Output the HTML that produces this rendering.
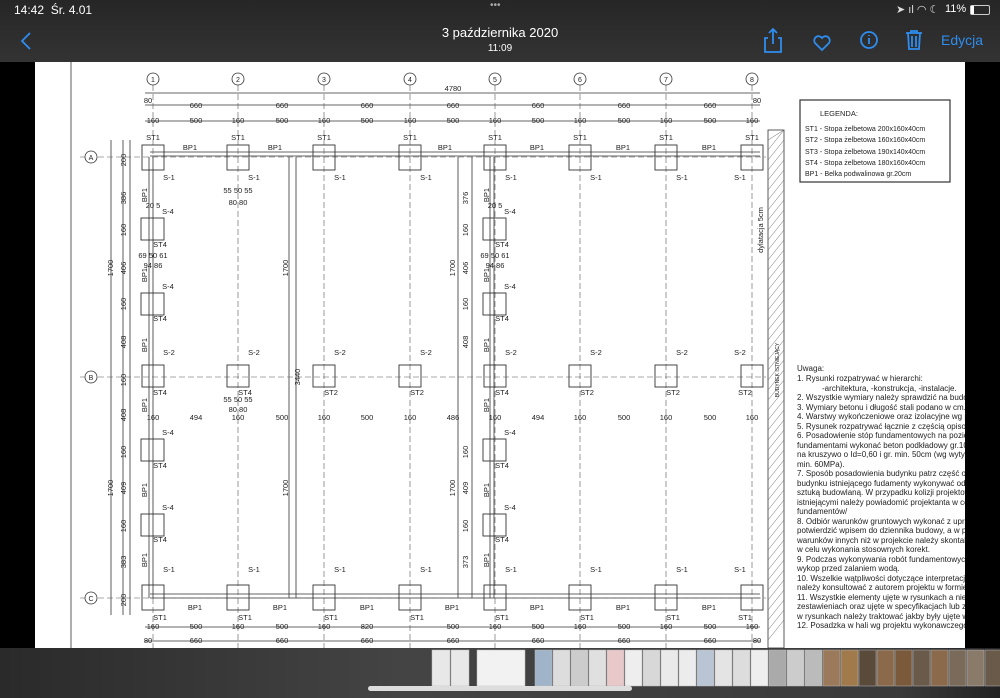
<!DOCTYPE html>
<html><head><meta charset="utf-8"><style>
html,body{margin:0;padding:0;background:#000;width:1000px;height:698px;overflow:hidden;font-family:"Liberation Sans",sans-serif}
#top{position:absolute;left:0;top:0;width:1000px;height:62px;background:linear-gradient(#262626,#333);color:#fff}
#paper{position:absolute;left:35px;top:62px;width:930px;height:586px;background:#fff;overflow:hidden}
#bot{position:absolute;left:0;top:648px;width:1000px;height:50px;background:linear-gradient(90deg,#2a2a2a,#444 40%,#3a3a3a 90%,#222)}
.t{position:absolute;white-space:nowrap}
</style></head><body>
<div id="top">
<div class="t" style="left:14px;top:3px;font-size:12px">14:42&nbsp; Śr. 4.01</div>
<div class="t" style="left:490px;top:0px;font-size:10px;color:#aaa">•••</div>
<div class="t" style="left:945px;top:3px;font-size:11px">11%</div>
<div style="position:absolute;left:970px;top:5px;width:18px;height:8px;border:1px solid #ccc;border-radius:2px"><div style="width:3px;height:8px;background:#fff"></div></div>
<div class="t" style="left:896px;top:3px;font-size:11px;color:#ddd">➤ ıl ◠ ☾</div>
<div class="t" style="left:0;width:1000px;text-align:center;top:25px;font-size:13px">3 października 2020</div>
<div class="t" style="left:0;width:1000px;text-align:center;top:43px;font-size:10px">11:09</div>
<svg style="position:absolute;left:0;top:0" width="1000" height="62" fill="none" stroke="#2f8df0" stroke-width="1.8">
<path d="M30 33 L22 41 L30 49"/>
<path d="M768 38h-3v14h16v-14h-3 M773 44v-14 M769 33l4-4 4 4"/>
<path d="M822 50 l-7-7 a4 4 0 0 1 7-5 a4 4 0 0 1 7 5z"/>
<circle cx="869" cy="40" r="8"/><path d="M869 38v6 M869 35v1"/>
<path d="M906 33h16 M911 33v-2h6v2 M908 33l1 16h10l1-16 M912 36v11 M916 36v11"/>
</svg>
<div class="t" style="left:941px;top:32px;font-size:14px;color:#2f8df0">Edycja</div>
</div>

<div id="paper">
<svg width="930" height="586" viewBox="35 62 930 586" font-family="Liberation Sans" font-size="8" fill="#222">
<g stroke="#333" stroke-width="0.8" fill="none">
<line x1="71" y1="62" x2="71" y2="648"/>
<line x1="145" y1="93" x2="760" y2="93"/>
<line x1="145" y1="105" x2="760" y2="105"/>
<line x1="145" y1="121" x2="760" y2="121"/>
<line x1="145" y1="627" x2="760" y2="627"/>
<line x1="145" y1="641" x2="760" y2="641"/>
<line x1="123" y1="140" x2="123" y2="615"/>
<line x1="130" y1="140" x2="130" y2="615"/>
<line x1="111" y1="140" x2="111" y2="615"/>
<!-- beams -->
<path d="M150 152H760M150 156H760M150 594H760M150 598H760"/>
<path d="M149 157V598M153 157V598M490 157V598M494 157V598M289 157V598M296 157V598"/>
<path d="M472 157V598M458 157V598"/>
<!-- hatch -->
<rect x="768" y="130" width="16" height="518"/>
</g>
<g stroke="#555" stroke-width="0.6" stroke-dasharray="6,3" fill="none">
<path d="M153 85V648M238 85V648M324 85V648M410 85V648M495 85V648M580 85V648M666 85V648M752 85V648"/>
<path d="M80 157H766M80 377H766M80 598H766"/>
</g>
<g stroke="#666" stroke-width="0.5">
<path d="M768 140l16-10M768 160l16-20M768 180l16-20M768 200l16-20M768 220l16-20M768 240l16-20M768 260l16-20M768 280l16-20M768 300l16-20M768 320l16-20M768 340l16-20M768 360l16-20M768 380l16-20M768 400l16-20M768 420l16-20M768 440l16-20M768 460l16-20M768 480l16-20M768 500l16-20M768 520l16-20M768 540l16-20M768 560l16-20M768 580l16-20M768 600l16-20M768 620l16-20M768 640l16-20M768 150l16-20M768 170l16-20M768 190l16-20M768 210l16-20M768 230l16-20M768 250l16-20M768 270l16-20M768 290l16-20M768 310l16-20M768 330l16-20M768 350l16-20M768 370l16-20M768 390l16-20M768 410l16-20M768 430l16-20M768 450l16-20M768 470l16-20M768 490l16-20M768 510l16-20M768 530l16-20M768 550l16-20M768 570l16-20M768 590l16-20M768 610l16-20M768 630l16-20"/>
</g>
<!-- column bubbles -->
<g fill="#fff" stroke="#333" stroke-width="0.8">
<circle cx="153" cy="79" r="6"/><circle cx="238" cy="79" r="6"/><circle cx="324" cy="79" r="6"/><circle cx="410" cy="79" r="6"/><circle cx="495" cy="79" r="6"/><circle cx="580" cy="79" r="6"/><circle cx="666" cy="79" r="6"/><circle cx="752" cy="79" r="6"/>
<circle cx="91" cy="157" r="6"/><circle cx="91" cy="377" r="6"/><circle cx="91" cy="598" r="6"/>
</g>
<g font-size="7" text-anchor="middle">
<text x="153" y="82">1</text><text x="238" y="82">2</text><text x="324" y="82">3</text><text x="410" y="82">4</text><text x="495" y="82">5</text><text x="580" y="82">6</text><text x="666" y="82">7</text><text x="752" y="82">8</text>
<text x="91" y="160">A</text><text x="91" y="380">B</text><text x="91" y="601">C</text>
</g>
<!-- footings -->
<g fill="none" stroke="#333" stroke-width="0.9">
<rect x="142" y="145" width="22" height="25"/><rect x="227" y="145" width="22" height="25"/><rect x="313" y="145" width="22" height="25"/><rect x="399" y="145" width="22" height="25"/><rect x="484" y="145" width="22" height="25"/><rect x="569" y="145" width="22" height="25"/><rect x="655" y="145" width="22" height="25"/><rect x="741" y="145" width="22" height="25"/>
<rect x="142" y="365" width="22" height="22"/><rect x="227" y="365" width="22" height="22"/><rect x="313" y="365" width="22" height="22"/><rect x="399" y="365" width="22" height="22"/><rect x="484" y="365" width="22" height="22"/><rect x="569" y="365" width="22" height="22"/><rect x="655" y="365" width="22" height="22"/><rect x="741" y="365" width="22" height="22"/>
<rect x="142" y="585" width="22" height="25"/><rect x="227" y="585" width="22" height="25"/><rect x="313" y="585" width="22" height="25"/><rect x="399" y="585" width="22" height="25"/><rect x="484" y="585" width="22" height="25"/><rect x="569" y="585" width="22" height="25"/><rect x="655" y="585" width="22" height="25"/><rect x="741" y="585" width="22" height="25"/>
<rect x="141" y="218" width="23" height="22"/><rect x="141" y="293" width="23" height="22"/><rect x="141" y="439" width="23" height="22"/><rect x="141" y="514" width="23" height="22"/>
<rect x="483" y="218" width="23" height="22"/><rect x="483" y="293" width="23" height="22"/><rect x="483" y="439" width="23" height="22"/><rect x="483" y="514" width="23" height="22"/>
<rect x="800" y="100" width="150" height="82" stroke-width="1.2"/>
</g>
<!-- labels -->
<g font-size="7.5" text-anchor="middle">
<text x="153" y="140">ST1</text><text x="238" y="140">ST1</text><text x="324" y="140">ST1</text><text x="410" y="140">ST1</text><text x="495" y="140">ST1</text><text x="580" y="140">ST1</text><text x="666" y="140">ST1</text><text x="752" y="140">ST1</text>
<text x="160" y="620">ST1</text><text x="245" y="620">ST1</text><text x="331" y="620">ST1</text><text x="417" y="620">ST1</text><text x="502" y="620">ST1</text><text x="587" y="620">ST1</text><text x="673" y="620">ST1</text><text x="745" y="620">ST1</text>
<text x="160" y="395">ST4</text><text x="245" y="395">ST4</text><text x="331" y="395">ST2</text><text x="417" y="395">ST2</text><text x="502" y="395">ST4</text><text x="587" y="395">ST2</text><text x="673" y="395">ST2</text><text x="745" y="395">ST2</text>
<text x="160" y="247">ST4</text><text x="160" y="321">ST4</text><text x="160" y="468">ST4</text><text x="160" y="542">ST4</text>
<text x="502" y="247">ST4</text><text x="502" y="321">ST4</text><text x="502" y="468">ST4</text><text x="502" y="542">ST4</text>
<text x="190" y="150">BP1</text><text x="275" y="150">BP1</text><text x="445" y="150">BP1</text><text x="537" y="150">BP1</text><text x="623" y="150">BP1</text><text x="709" y="150">BP1</text>
<text x="195" y="610">BP1</text><text x="280" y="610">BP1</text><text x="367" y="610">BP1</text><text x="452" y="610">BP1</text><text x="537" y="610">BP1</text><text x="623" y="610">BP1</text><text x="709" y="610">BP1</text>
<text x="169" y="180">S-1</text><text x="254" y="180">S-1</text><text x="340" y="180">S-1</text><text x="426" y="180">S-1</text><text x="511" y="180">S-1</text><text x="596" y="180">S-1</text><text x="682" y="180">S-1</text><text x="740" y="180">S-1</text>
<text x="169" y="355">S-2</text><text x="254" y="355">S-2</text><text x="340" y="355">S-2</text><text x="426" y="355">S-2</text><text x="511" y="355">S-2</text><text x="596" y="355">S-2</text><text x="682" y="355">S-2</text><text x="740" y="355">S-2</text>
<text x="169" y="572">S-1</text><text x="254" y="572">S-1</text><text x="340" y="572">S-1</text><text x="426" y="572">S-1</text><text x="511" y="572">S-1</text><text x="596" y="572">S-1</text><text x="682" y="572">S-1</text><text x="740" y="572">S-1</text>
<text x="168" y="214">S-4</text><text x="168" y="289">S-4</text><text x="168" y="435">S-4</text><text x="168" y="510">S-4</text>
<text x="510" y="214">S-4</text><text x="510" y="289">S-4</text><text x="510" y="435">S-4</text><text x="510" y="510">S-4</text>
</g>
<g font-size="7.5" text-anchor="middle">
<text x="453" y="91">4780</text>
<text x="148" y="103">80</text><text x="196" y="108">660</text><text x="282" y="108">660</text><text x="367" y="108">660</text><text x="453" y="108">660</text><text x="538" y="108">660</text><text x="624" y="108">660</text><text x="710" y="108">660</text><text x="757" y="103">80</text>
<text x="153" y="123">160</text><text x="196" y="123">500</text><text x="238" y="123">160</text><text x="282" y="123">500</text><text x="324" y="123">160</text><text x="367" y="123">500</text><text x="410" y="123">160</text><text x="453" y="123">500</text><text x="495" y="123">160</text><text x="538" y="123">500</text><text x="580" y="123">160</text><text x="624" y="123">500</text><text x="666" y="123">160</text><text x="710" y="123">500</text><text x="752" y="123">160</text>
<text x="153" y="420">160</text><text x="196" y="420">494</text><text x="238" y="420">160</text><text x="282" y="420">500</text><text x="324" y="420">160</text><text x="367" y="420">500</text><text x="410" y="420">160</text><text x="453" y="420">486</text><text x="495" y="420">160</text><text x="538" y="420">494</text><text x="580" y="420">160</text><text x="624" y="420">500</text><text x="666" y="420">160</text><text x="710" y="420">500</text><text x="752" y="420">160</text>
<text x="153" y="629">160</text><text x="196" y="629">500</text><text x="238" y="629">160</text><text x="282" y="629">500</text><text x="324" y="629">160</text><text x="367" y="629">820</text><text x="453" y="629">500</text><text x="495" y="629">160</text><text x="538" y="629">500</text><text x="580" y="629">160</text><text x="624" y="629">500</text><text x="666" y="629">160</text><text x="710" y="629">500</text><text x="752" y="629">160</text>
<text x="148" y="643">80</text><text x="196" y="643">660</text><text x="282" y="643">660</text><text x="367" y="643">660</text><text x="453" y="643">660</text><text x="538" y="643">660</text><text x="624" y="643">660</text><text x="710" y="643">660</text><text x="757" y="643">80</text>
<text x="153" y="258">69 50 61</text><text x="153" y="268">94 86</text><text x="495" y="258">69 50 61</text><text x="495" y="268">94 86</text>
<text x="238" y="193">55 50 55</text><text x="238" y="205">80 80</text><text x="238" y="402">55 50 55</text><text x="238" y="412">80 80</text>
<text x="153" y="208">20 5</text><text x="495" y="208">20 5</text>
</g>
<g font-size="7.5" text-anchor="middle">
<text transform="translate(126,160) rotate(-90)">200</text><text transform="translate(126,198) rotate(-90)">386</text><text transform="translate(126,230) rotate(-90)">160</text><text transform="translate(126,268) rotate(-90)">406</text><text transform="translate(126,304) rotate(-90)">160</text><text transform="translate(126,342) rotate(-90)">408</text><text transform="translate(126,380) rotate(-90)">160</text><text transform="translate(126,415) rotate(-90)">408</text><text transform="translate(126,452) rotate(-90)">160</text><text transform="translate(126,488) rotate(-90)">409</text><text transform="translate(126,526) rotate(-90)">160</text><text transform="translate(126,562) rotate(-90)">383</text><text transform="translate(126,600) rotate(-90)">200</text>
<text transform="translate(113,268) rotate(-90)">1700</text><text transform="translate(113,488) rotate(-90)">1700</text>
<text transform="translate(288,268) rotate(-90)">1700</text><text transform="translate(288,488) rotate(-90)">1700</text><text transform="translate(300,377) rotate(-90)">3440</text>
<text transform="translate(455,268) rotate(-90)">1700</text><text transform="translate(455,488) rotate(-90)">1700</text>
<text transform="translate(468,198) rotate(-90)">376</text><text transform="translate(468,230) rotate(-90)">160</text><text transform="translate(468,268) rotate(-90)">406</text><text transform="translate(468,304) rotate(-90)">160</text><text transform="translate(468,342) rotate(-90)">408</text><text transform="translate(468,452) rotate(-90)">160</text><text transform="translate(468,488) rotate(-90)">409</text><text transform="translate(468,526) rotate(-90)">160</text><text transform="translate(468,562) rotate(-90)">373</text>
<text transform="translate(147,195) rotate(-90)">BP1</text><text transform="translate(147,275) rotate(-90)">BP1</text><text transform="translate(147,345) rotate(-90)">BP1</text><text transform="translate(147,405) rotate(-90)">BP1</text><text transform="translate(147,490) rotate(-90)">BP1</text><text transform="translate(147,560) rotate(-90)">BP1</text>
<text transform="translate(489,195) rotate(-90)">BP1</text><text transform="translate(489,275) rotate(-90)">BP1</text><text transform="translate(489,345) rotate(-90)">BP1</text><text transform="translate(489,405) rotate(-90)">BP1</text><text transform="translate(489,490) rotate(-90)">BP1</text><text transform="translate(489,560) rotate(-90)">BP1</text>
<text transform="translate(763,230) rotate(-90)">dylatacja 5cm</text>
<text transform="translate(779,370) rotate(-90)" font-size="5">BUDYNEK ISTNIEJĄCY</text>
</g>
<g font-size="7">
<text x="820" y="116" font-size="7.5">LEGENDA:</text>
<text x="805" y="131">ST1 - Stopa żelbetowa 200x160x40cm</text>
<text x="805" y="142">ST2 - Stopa żelbetowa 160x160x40cm</text>
<text x="805" y="154">ST3 - Stopa żelbetowa 190x140x40cm</text>
<text x="805" y="165">ST4 - Stopa żelbetowa 180x160x40cm</text>
<text x="805" y="176">BP1 - Belka podwalinowa gr.20cm</text>
</g>
<g font-size="8">
<text x="797" y="371">Uwaga:</text>
<text x="797" y="381">1. Rysunki rozpatrywać w hierarchi:</text>
<text x="822" y="391">-architektura, -konstrukcja, -instalacje.</text>
<text x="797" y="400">2. Wszystkie wymiary należy sprawdzić na budowie</text>
<text x="797" y="410">3. Wymiary betonu i długość stali podano w cm.</text>
<text x="797" y="419">4. Warstwy wykończeniowe oraz izolacyjne wg proj.</text>
<text x="797" y="429">5. Rysunek rozpatrywać łącznie z częścią opisową</text>
<text x="797" y="438">6. Posadowienie stóp fundamentowych na poziomie</text>
<text x="797" y="448">fundamentami wykonać beton podkładowy gr.10cm</text>
<text x="797" y="457">na kruszywo o Id=0,60 i gr. min. 50cm (wg wytycznych</text>
<text x="797" y="467">min. 60MPa).</text>
<text x="797" y="476">7. Sposób posadowienia budynku patrz część opisowa</text>
<text x="797" y="486">budynku istniejącego fudamenty wykonywać odcinkami</text>
<text x="797" y="495">sztuką budowlaną. W przypadku kolizji projektowanych</text>
<text x="797" y="505">istniejącymi należy powiadomić projektanta w celu</text>
<text x="797" y="514">fundamentów/</text>
<text x="797" y="524">8. Odbiór warunków gruntowych wykonać z uprawnieniami</text>
<text x="797" y="533">potwierdzić wpisem do dziennika budowy, a w przypadku</text>
<text x="797" y="543">warunków innych niż w projekcie należy skontaktować</text>
<text x="797" y="552">w celu wykonania stosownych korekt.</text>
<text x="797" y="562">9. Podczas wykonywania robót fundamentowych</text>
<text x="797" y="571">wykop przed zalaniem wodą.</text>
<text x="797" y="581">10. Wszelkie wątpliwości dotyczące interpretacji</text>
<text x="797" y="590">należy konsultować z autorem projektu w formie</text>
<text x="797" y="600">11. Wszystkie elementy ujęte w rysunkach a nie</text>
<text x="797" y="609">zestawieniach oraz ujęte w specyfikacjach lub z</text>
<text x="797" y="619">w rysunkach należy traktować jakby były ujęte w</text>
<text x="797" y="628">12. Posadzka w hali wg projektu wykonawczego</text>
</g>
</svg>
</div>

<div id="bot">
<svg width="1000" height="50" style="position:absolute;left:0;top:0">
<g stroke="#bbb" stroke-width="0.5">
<rect x="432" y="2" width="18" height="36" fill="#e8e8e8"/><rect x="451" y="2" width="18" height="36" fill="#e8e8e8"/>
<rect x="477" y="2" width="48" height="36" fill="#f2f2f2"/>
<rect x="535" y="2" width="17" height="36" fill="#9fb4c8"/><rect x="553" y="2" width="17" height="36" fill="#ddd"/><rect x="571" y="2" width="17" height="36" fill="#ccc"/><rect x="589" y="2" width="17" height="36" fill="#e0e0e0"/><rect x="607" y="2" width="17" height="36" fill="#e8c8c8"/><rect x="625" y="2" width="17" height="36" fill="#eee"/><rect x="643" y="2" width="17" height="36" fill="#d8d8d8"/><rect x="661" y="2" width="17" height="36" fill="#eaeaea"/><rect x="679" y="2" width="17" height="36" fill="#ececec"/><rect x="697" y="2" width="17" height="36" fill="#b9c4d4"/><rect x="715" y="2" width="17" height="36" fill="#e4e4e4"/><rect x="733" y="2" width="17" height="36" fill="#ddd"/><rect x="751" y="2" width="17" height="36" fill="#eee"/><rect x="769" y="2" width="17" height="36" fill="#aaa"/><rect x="787" y="2" width="17" height="36" fill="#ccc"/><rect x="805" y="2" width="17" height="36" fill="#bbb"/><rect x="823" y="2" width="17" height="36" fill="#9a7a5a"/><rect x="841" y="2" width="17" height="36" fill="#a07a4a"/><rect x="859" y="2" width="17" height="36" fill="#5a4a3a"/><rect x="877" y="2" width="17" height="36" fill="#8a6a4a"/><rect x="895" y="2" width="17" height="36" fill="#7a5a3a"/><rect x="913" y="2" width="17" height="36" fill="#6a5a4a"/><rect x="931" y="2" width="17" height="36" fill="#8a6a4a"/><rect x="949" y="2" width="17" height="36" fill="#7a6a5a"/><rect x="967" y="2" width="17" height="36" fill="#8a7a6a"/><rect x="985" y="2" width="17" height="36" fill="#6a5a4a"/>
</g>
<rect x="368" y="38" width="264" height="5" rx="2.5" fill="#ddd"/>
</svg>
</div>
</body></html>
